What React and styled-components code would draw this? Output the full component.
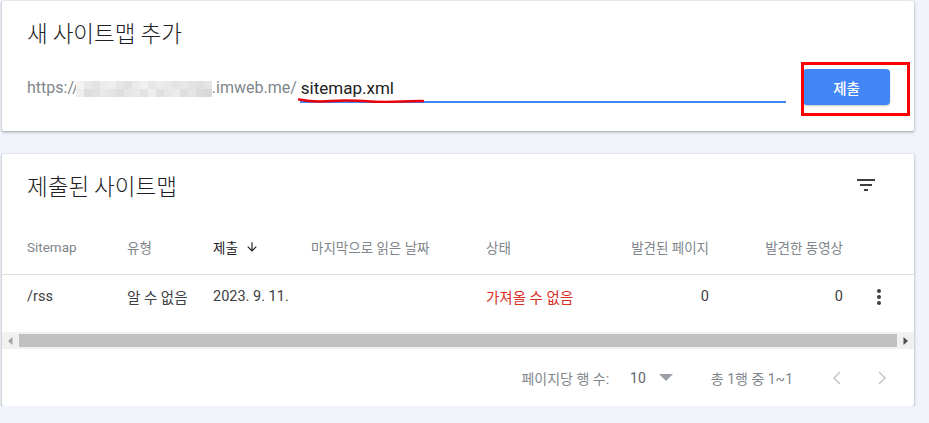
import React from 'react';
import styled, { createGlobalStyle } from 'styled-components';

const GlobalStyle = createGlobalStyle`
  html, body {
    margin: 0;
    padding: 0;
    background: #f1f4fb;
  }
  body {
    font-family: Roboto, "Noto Sans CJK KR", sans-serif;
    color: #202124;
  }
`;

const Page = styled.div`
  display: flex;
  flex-direction: column;
  gap: 23px;
  width: 912px;
  padding: 1px 0 0 2px;
`;

const Card = styled.section`
  background: #fff;
  border-radius: 2px;
  box-shadow: 0 1px 2px 0 rgba(60, 64, 67, 0.3), 0 1px 3px 1px rgba(60, 64, 67, 0.15);
`;

const AddCard = styled(Card)`
  padding: 17px 24px 26px 25px;
`;

const Title = styled.h2`
  margin: 0;
  font-family: "Noto Sans CJK KR", Roboto, sans-serif;
  font-size: 22.5px;
  font-weight: 300;
  line-height: 28px;
  color: #202124;
`;

const UrlRow = styled.div`
  display: flex;
  align-items: center;
  height: 36px;
  margin-top: 23px;
`;

const Field = styled.div`
  position: relative;
  display: flex;
  align-items: flex-end;
  box-sizing: border-box;
  height: 32px;
  padding-bottom: 3px;
  border-bottom: 2px solid ${({ $underline }) => ($underline ? '#4285f4' : 'transparent')};
  flex: ${({ $grow }) => ($grow ? 1 : 'none')};
  margin-left: ${({ $grow }) => ($grow ? '3px' : '0')};
`;

const Prefix = styled.div`
  display: flex;
  align-items: center;
  height: 20px;
  font-size: 16px;
  line-height: 20px;
  color: #80868b;
  white-space: nowrap;
`;

const Blur = styled.span`
  display: grid;
  grid-template-columns: repeat(17, 8px);
  grid-template-rows: 8px 8px;
  margin: 2px 0 0 -3px;
`;

const BlurCell = styled.span`
  background: ${({ $shade }) => $shade};
`;

const InputText = styled.span`
  font-size: 17px;
  line-height: 20px;
  color: #202124;
  padding-left: 1px;
`;

const Scribble = styled.svg`
  position: absolute;
  left: -3px;
  bottom: -3px;
`;

const ButtonSlot = styled.div`
  position: relative;
  margin-left: 17px;
`;

const SubmitButton = styled.button`
  width: 87px;
  height: 36px;
  border: none;
  border-radius: 4px;
  background: #4285f4;
  color: #fff;
  font-family: "Noto Sans CJK KR", Roboto, sans-serif;
  font-size: 14.5px;
  font-weight: 500;
  box-shadow: 0 1px 2px rgba(60, 64, 67, 0.3);
  cursor: pointer;
`;

const RedMark = styled.div`
  position: absolute;
  left: -2px;
  top: -7px;
  width: 109px;
  height: 54px;
  box-sizing: border-box;
  border: 3px solid #ff0000;
  pointer-events: none;
`;

const ListCard = styled(Card)`
  overflow: hidden;
`;

const ListHead = styled.div`
  display: flex;
  align-items: center;
  justify-content: space-between;
  padding: 17px 36px 0 25px;
`;

const IconButton = styled.button`
  display: flex;
  align-items: center;
  justify-content: center;
  padding: 0;
  border: none;
  background: none;
  color: ${({ $dim }) => ($dim ? '#bdc1c6' : '#3c4043')};
  cursor: pointer;
`;

const Grid = styled.div`
  display: grid;
  grid-template-columns: 100px 86px 98px 175px 123px 100px 134px 1fr;
  align-items: center;
  padding-left: 25px;
`;

const HeaderRow = styled(Grid)`
  height: 55px;
  margin-top: 20px;
  border-bottom: 1px solid #e0e0e0;
`;

const HeadCell = styled.div`
  display: flex;
  align-items: center;
  justify-content: ${({ $right }) => ($right ? 'flex-end' : 'flex-start')};
  font-size: 13.5px;
  color: ${({ $active }) => ($active ? '#202124' : '#80868b')};
  white-space: nowrap;
`;

const DataRow = styled(Grid)`
  height: 43px;
  margin-bottom: 14px;
`;

const Cell = styled.div`
  display: flex;
  align-items: center;
  justify-content: ${({ $right, $center }) => ($center ? 'center' : $right ? 'flex-end' : 'flex-start')};
  font-size: 14.5px;
  color: ${({ $error }) => ($error ? '#d93025' : '#3c4043')};
  white-space: nowrap;
`;

const ScrollBar = styled.div`
  display: flex;
  align-items: center;
  height: 17px;
  background: #f1f1f1;
`;

const ScrollArrow = styled.div`
  display: flex;
  align-items: center;
  justify-content: center;
  width: 17px;
  height: 17px;
  flex: none;
`;

const ScrollThumb = styled.div`
  flex: 1;
  height: 13px;
  background: #c1c1c1;
`;

const Footer = styled.div`
  display: flex;
  align-items: center;
  justify-content: flex-end;
  height: 57px;
  padding-right: 21px;
  font-size: 14px;
  color: #80868b;
`;

const PerPage = styled.span`
  margin-right: 21px;
`;

const PageSize = styled.span`
  color: #5f6368;
  margin-right: 13px;
`;

const Range = styled.span`
  margin-left: 38px;
  margin-right: 33px;
`;

const Pager = styled.div`
  display: flex;
  gap: 19px;
`;

const blurShades = [
  '#f3f3f3', '#e9e9e9', '#e4e4e4', '#ececec', '#eeeeee', '#e6e6e6', '#e0e0e4', '#ebebeb', '#f0f0f0',
  '#e7e7e7', '#ececec', '#e9e9e9', '#e4e4e4', '#e8e8e8', '#e2e2e2', '#e0e0e0', '#e5e5e5',
  '#efefef', '#dddddd', '#e1e1e1', '#e8e8e8', '#e3e3e3', '#dedede', '#e6e6e6', '#e9e9e9', '#e2e2e2',
  '#ededed', '#e0e0e0', '#e7e7e7', '#ebebeb', '#dfdfdf', '#e5e5e5', '#dcdcdc', '#dad9d9',
];

const FilterIcon = () => (
  <svg width="24" height="24" viewBox="0 0 24 24" fill="currentColor">
    <path d="M10 18h4v-2h-4v2zM3 6v2h18V6H3zm3 7h12v-2H6v2z" />
  </svg>
);

const ArrowDown = () => (
  <svg width="14" height="14" viewBox="0 0 24 24" fill="#202124" style={{ marginLeft: 7 }}>
    <path d="M20 12l-1.41-1.41L13 16.17V4h-2v12.17l-5.58-5.59L4 12l8 8 8-8z" />
  </svg>
);

const MoreIcon = () => (
  <svg width="24" height="24" viewBox="0 0 24 24" fill="#3c4043">
    <circle cx="12" cy="6" r="2" />
    <circle cx="12" cy="12" r="2" />
    <circle cx="12" cy="18" r="2" />
  </svg>
);

const Chevron = ({ right }) => (
  <svg width="24" height="24" viewBox="0 0 24 24" fill="none" stroke="currentColor" strokeWidth="1.4">
    <path d={right ? 'M10 6l6 6-6 6' : 'M14 6l-6 6 6 6'} />
  </svg>
);

const columns = [
  { label: 'Sitemap' },
  { label: '유형' },
  { label: '제출', active: true },
  { label: '마지막으로 읽은 날짜' },
  { label: '상태' },
  { label: '발견된 페이지', right: true },
  { label: '발견한 동영상', right: true },
];

const App = () => (
  <>
    <GlobalStyle />
    <Page>
      <AddCard>
        <Title>새 사이트맵 추가</Title>
        <UrlRow>
          <Field>
            <Prefix>
              <span>https://</span>
              <Blur>
                {blurShades.map((shade, i) => (
                  <BlurCell key={i} $shade={shade} />
                ))}
              </Blur>
              <span>.imweb.me/</span>
            </Prefix>
          </Field>
          <Field $underline $grow>
            <InputText>sitemap.xml</InputText>
            <Scribble width="128" height="7" viewBox="0 0 128 7">
              <path
                d="M2 2.5 C 12 4.5, 22 5, 34 4 S 60 3.5, 74 4.5 S 100 5, 126 4"
                fill="none"
                stroke="#e8000b"
                strokeWidth="2.4"
                strokeLinecap="round"
              />
            </Scribble>
          </Field>
          <ButtonSlot>
            <SubmitButton>제출</SubmitButton>
            <RedMark />
          </ButtonSlot>
        </UrlRow>
      </AddCard>

      <ListCard>
        <ListHead>
          <Title>제출된 사이트맵</Title>
          <IconButton aria-label="필터">
            <FilterIcon />
          </IconButton>
        </ListHead>

        <HeaderRow>
          {columns.map((col) => (
            <HeadCell key={col.label} $active={col.active} $right={col.right}>
              {col.label}
              {col.active && <ArrowDown />}
            </HeadCell>
          ))}
          <HeadCell />
        </HeaderRow>

        <DataRow>
          <Cell>/rss</Cell>
          <Cell>알 수 없음</Cell>
          <Cell>2023. 9. 11.</Cell>
          <Cell />
          <Cell $error>가져올 수 없음</Cell>
          <Cell $right>0</Cell>
          <Cell $right>0</Cell>
          <Cell $center>
            <MoreIcon />
          </Cell>
        </DataRow>

        <ScrollBar>
          <ScrollArrow>
            <svg width="5" height="8" viewBox="0 0 5 8">
              <path d="M4.5 0v8L0 4z" fill="#a3a3a3" />
            </svg>
          </ScrollArrow>
          <ScrollThumb />
          <ScrollArrow>
            <svg width="5" height="8" viewBox="0 0 5 8">
              <path d="M0.5 0v8L5 4z" fill="#505050" />
            </svg>
          </ScrollArrow>
        </ScrollBar>

        <Footer>
          <PerPage>페이지당 행 수:</PerPage>
          <PageSize>10</PageSize>
          <svg width="14" height="7" viewBox="0 0 14 7">
            <path d="M0 0h14L7 7z" fill="#9aa0a6" />
          </svg>
          <Range>총 1행 중 1~1</Range>
          <Pager>
            <IconButton $dim aria-label="이전">
              <Chevron />
            </IconButton>
            <IconButton $dim aria-label="다음">
              <Chevron right />
            </IconButton>
          </Pager>
        </Footer>
      </ListCard>
    </Page>
  </>
);

export default App;
